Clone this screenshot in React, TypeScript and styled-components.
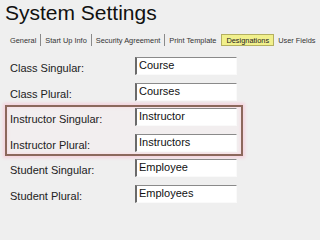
import styled, { createGlobalStyle } from 'styled-components'

const GlobalStyle = createGlobalStyle`
  html, body {
    margin: 0;
    padding: 0;
    background: #efefef;
  }
  body {
    font-family: "Liberation Sans", Arial, sans-serif;
    color: #1a1a1a;
  }
`;

const Page = styled.div`
  width: 320px;
  height: 213px;
  overflow: hidden;
  background: #efefef;
`;

const Title = styled.h1`
  margin: 1px 0 0 5px;
  font-size: 21px;
  line-height: 24px;
  font-weight: normal;
  color: #111;
`;

const Tabs = styled.div`
  display: flex;
  align-items: stretch;
  margin: 9px 0 0 6px;
  height: 12px;
`;

const Tab = styled.span<{ $active?: boolean; $bare?: boolean }>`
  display: flex;
  align-items: center;
  padding: 0 4px;
  font-size: 7.4px;
  color: #333;
  white-space: nowrap;
  border-right: 1px solid ${p => (p.$bare ? 'transparent' : '#8a8a8a')};
  ${p =>
    p.$active &&
    `
    background: #f1f08c;
    border: 1px solid #b4b060;
    color: #222;
  `}
`;

const Form = styled.div`
  display: flex;
  flex-direction: column;
  gap: 7.6px;
  margin-top: 11px;
  padding-left: 10px;
`;

const Row = styled.div`
  display: flex;
  align-items: flex-start;
  height: 18px;
`;

const Label = styled.span`
  width: 125px;
  padding-top: 2px;
  font-size: 11px;
  line-height: 18px;
  color: #222;
`;

const Field = styled.input`
  box-sizing: border-box;
  width: 102px;
  height: 18px;
  margin: 0;
  padding: 0 2px 2px;
  font-family: "Liberation Sans", Arial, sans-serif;
  font-size: 11px;
  color: #111;
  background: #fff;
  border: 1px solid #fafafa;
  border-top-color: #8a8a8a;
  border-left: 2px solid #6a6a6a;
  outline: none;
`;

const Highlight = styled.div`
  align-self: flex-start;
  display: flex;
  flex-direction: column;
  gap: 7.6px;
  margin: -3px 0 -4px -5px;
  padding: 1px 4px 2px 3px;
  border: 2px solid #8c685c;
  background: #f2eeef;
  box-shadow: 0 0 3px 2px #f5d3de, inset 0 0 3px 1px #f7dde5;
`;

const rows = [
  { label: 'Class Singular:', value: 'Course' },
  { label: 'Class Plural:', value: 'Courses' },
];

const instructorRows = [
  { label: 'Instructor Singular:', value: 'Instructor' },
  { label: 'Instructor Plural:', value: 'Instructors' },
];

const studentRows = [
  { label: 'Student Singular:', value: 'Employee' },
  { label: 'Student Plural:', value: 'Employees' },
];

const tabs = ['General', 'Start Up Info', 'Security Agreement', 'Print Template', 'Designations', 'User Fields'];
const activeTab = 'Designations';

function SettingRow({ label, value }: { label: string; value: string }) {
  return (
    <Row>
      <Label>{label}</Label>
      <Field readOnly value={value} />
    </Row>
  )
}

export default function App() {
  return (
    <Page>
      <GlobalStyle />
      <Title>System Settings</Title>
      <Tabs>
        {tabs.map((t, i) => (
          <Tab key={t} $active={t === activeTab} $bare={tabs[i + 1] === activeTab}>{t}</Tab>
        ))}
      </Tabs>
      <Form>
        {rows.map(r => <SettingRow key={r.label} {...r} />)}
        <Highlight>
          {instructorRows.map(r => <SettingRow key={r.label} {...r} />)}
        </Highlight>
        {studentRows.map(r => <SettingRow key={r.label} {...r} />)}
      </Form>
    </Page>
  )
}
